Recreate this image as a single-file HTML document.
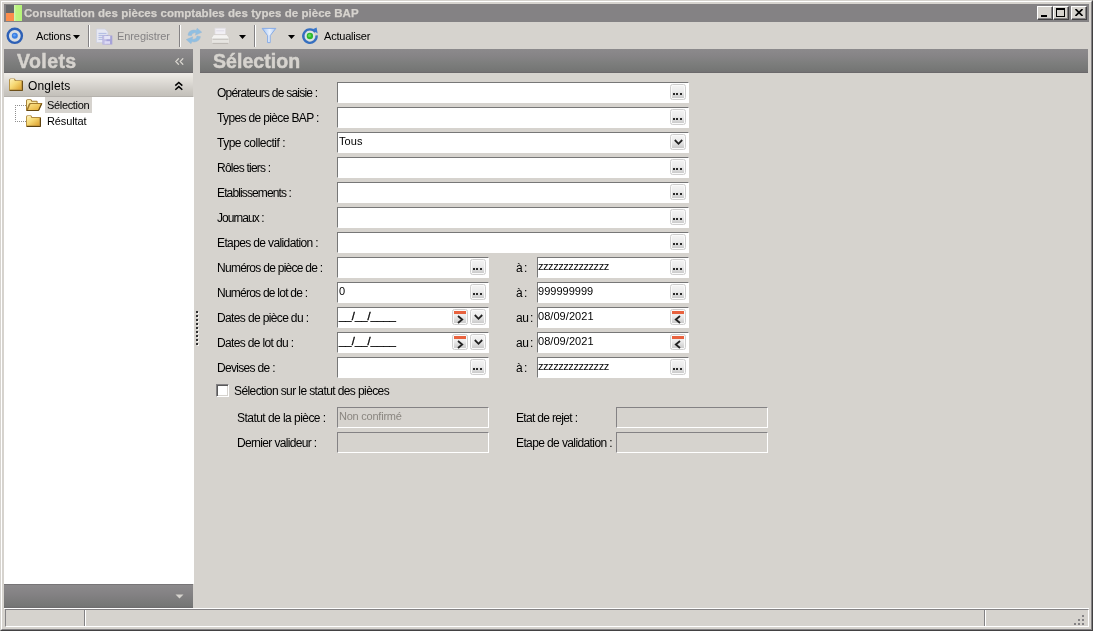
<!DOCTYPE html>
<html lang="fr"><head><meta charset="utf-8"><title>Consultation des pièces comptables des types de pièce BAP</title>
<style>
html,body{margin:0;padding:0;background:#d6d3ce;}
#win{position:relative;width:1093px;height:631px;overflow:hidden;background:#d6d3ce;font-family:"Liberation Sans",sans-serif;font-size:11px;color:#000;}
#win div,#win span,#win svg{position:absolute;box-sizing:border-box;}
.t{white-space:pre;will-change:transform;}
.titlebar{left:4px;top:4px;width:1085px;height:18px;background:#848284;}
.cb{top:6px;width:16px;height:14px;background:#d6d3ce;border:1px solid;border-color:#fff #424142 #424142 #fff;box-shadow:inset -1px -1px 0 #848284;}
.sep{top:25px;width:2px;height:22px;border-left:1px solid #848284;border-right:1px solid #fff;}
.hdr{top:49px;height:24px;background:linear-gradient(#8c8a8c 0,#868486 30%,#7d7e7d 58%,#757675 88%,#737173 95.9%,#6b696b 96%,#6b696b 100%);}
.fld{height:21px;background:#fff;border:1px solid;border-color:#777 #fff #fff #777;}
.fld.dis{background:#d6d3ce;border-color:#848284 #fff #fff #848284;}
.btn{width:16px;height:15.5px;border:1px solid #cfcfcf;border-radius:2.5px;background:linear-gradient(#f4f4f4 0,#ececec 45%,#c6c6c6 100%);box-shadow:inset 0 0 0 1px #fafafa;}
.dots{left:2.4px;top:7.8px;width:10px;height:2.2px;background:linear-gradient(90deg,#2a2a2a 0 2px,transparent 2px 3.4px,#2a2a2a 3.4px 5.4px,transparent 5.4px 6.8px,#2a2a2a 6.8px 8.8px,transparent 8.8px);}

</style></head>
<body>
<div id="win">
<!-- window frame -->
<div style="left:0;top:0;width:1093px;height:631px;border:1px solid;border-color:#d6d3ce #424142 #424142 #d6d3ce;"></div>
<div style="left:1px;top:1px;width:1091px;height:629px;border:1px solid;border-color:#fff #848284 #848284 #fff;"></div>
<!-- title bar -->
<div class="titlebar"></div>
<div style="left:6px;top:5px;width:8px;height:8px;background:#66686a;"></div>
<div style="left:6px;top:13px;width:8px;height:8px;background:#fb8d4c;"></div>
<div style="left:14px;top:5px;width:8px;height:16px;background:linear-gradient(90deg,#d9f7c0 0,#bdf582 25%,#b6f478 100%);"></div>
<div class="cb" style="left:1037px;"><div style="left:3px;top:8px;width:6px;height:2px;background:#000;"></div></div>
<div class="cb" style="left:1053px;"><div style="left:2px;top:1px;width:9px;height:9px;border:1px solid #000;border-top-width:2px;"></div></div>
<div class="cb" style="left:1071px;"><svg style="left:3px;top:2px" width="8" height="7" viewBox="0 0 8 7"><path d="M0.5 0 L7.5 7 M7.5 0 L0.5 7" stroke="#000" stroke-width="1.6" fill="none"/></svg></div>
<!-- toolbar -->
<svg style="left:6px;top:27px" width="18" height="18" viewBox="0 0 18 18">
 <circle cx="8.8" cy="8.8" r="7.1" fill="#d9dee2" stroke="#2d60b6" stroke-width="2.4"/>
 <circle cx="8.8" cy="8.7" r="3" fill="#3a7fe2"/><circle cx="8.4" cy="8.2" r="1.3" fill="#62a2f4"/>
</svg>
<svg style="left:73px;top:35px" width="7" height="4" viewBox="0 0 7 4"><path d="M0 0H7L3.5 4Z" fill="#000"/></svg>
<div class="sep" style="left:88px;"></div>
<svg style="left:96px;top:28px" width="17" height="17" viewBox="0 0 17 17">
 <path d="M0.5 1h8.5l3 3v10.5H0.5z" fill="#e6e8f3" stroke="#cfd2e0" stroke-width=".8"/>
 <path d="M2.5 5.4h8M2.5 7.4h9.5M2.5 9.4h7M2.5 11.4h5" stroke="#a9b3de" stroke-width=".9"/>
 <rect x="6.5" y="7.5" width="9.8" height="9" fill="#a6a2d8"/>
 <rect x="6.5" y="7.5" width="4" height="9" fill="#c5c3e6" opacity=".8"/>
 <rect x="8.2" y="8" width="6" height="3.2" fill="#e4e4f6"/><rect x="8.6" y="13.2" width="5.4" height="2.6" fill="#dcdaf4"/>
</svg>
<div class="sep" style="left:179px;"></div>
<svg style="left:185px;top:27px" width="18" height="18" viewBox="0 0 18 18">
 <path d="M3 8.2 C3.2 4.2 7.5 2.2 11.2 3.4 L12.2 1.2 L16.8 5.2 L10.4 8.2 L11 6 C8.6 5.4 7 6.4 6.4 8.8 Z" fill="#8fbfe2" stroke="#9db9d3" stroke-width=".5"/>
 <path d="M15.4 9.6 C15 13.8 10.6 15.8 7 14.6 L6 16.8 L1.2 12.6 L7.8 9.8 L7.2 12 C9.6 12.6 11.4 11.6 12 9 Z" fill="#8fbfe2" stroke="#9db9d3" stroke-width=".5"/>
</svg>
<svg style="left:211px;top:27px" width="19" height="18" viewBox="0 0 19 18">
 <rect x="4" y="1.2" width="10.4" height="7.4" fill="#f1eff4" stroke="#e0dde2" stroke-width=".8"/>
 <rect x="5.2" y="3" width="8" height="1.4" fill="#e4e1ea"/>
 <path d="M2.6 7.6h13.4l2 3v4.6q0 1.4-1.4 1.4H2q-1.4 0-1.4-1.4V10.6z" fill="#f4f3f1" stroke="#cfccc6" stroke-width=".8"/>
 <path d="M1.4 12.2h16" stroke="#b9b6b0" stroke-width="1"/>
 <path d="M1 13h16.8v2.2q0 1.2-1.2 1.2H2.2q-1.2 0-1.2-1.2z" fill="#e6e4e0"/>
 <path d="M1.6 16.4h15.6" stroke="#bab7b1" stroke-width="1"/>
</svg>
<svg style="left:239px;top:35px" width="7" height="4" viewBox="0 0 7 4"><path d="M0 0H7L3.5 4Z" fill="#000"/></svg>
<div class="sep" style="left:254px;"></div>
<svg style="left:261px;top:27px" width="16" height="17" viewBox="0 0 16 17">
 <defs><linearGradient id="fn" x1="0" y1="0" x2="1" y2="0"><stop offset="0" stop-color="#9fc2f5"/><stop offset=".55" stop-color="#e9f1fd"/><stop offset="1" stop-color="#a9c7f3"/></linearGradient></defs>
 <path d="M1.2 1.4h13.6L9.2 8.6v7h-2.6V8.6z" fill="url(#fn)" stroke="#7ea6e6" stroke-width=".9" stroke-linejoin="round"/>
</svg>
<svg style="left:288px;top:35px" width="7" height="4" viewBox="0 0 7 4"><path d="M0 0H7L3.5 4Z" fill="#000"/></svg>
<svg style="left:301px;top:27px" width="18" height="18" viewBox="0 0 18 18">
 <circle cx="8.9" cy="9" r="5" fill="#dbe6ea"/>
 <path d="M14.4 5.2 A6.7 6.7 0 1 0 15.6 8.4" fill="none" stroke="#356fc0" stroke-width="2.3"/>
 <path d="M11.2 2.6 L15.6 0.6 L16.6 6.6 Z" fill="#3a78cc"/>
 <circle cx="8.9" cy="9" r="3.2" fill="#2db82d"/><circle cx="8.5" cy="8.4" r="1.5" fill="#62dc55"/>
</svg>
<!-- left panel -->
<div class="hdr" style="left:4px;width:189px;"></div>
<svg style="left:175px;top:58px" width="9" height="7" viewBox="0 0 9 7"><path d="M3.8 0.3 L0.8 3.5 L3.8 6.7 M8.2 0.3 L5.2 3.5 L8.2 6.7" fill="none" stroke="#dcd9d2" stroke-width="1.2"/></svg>
<div style="left:4px;top:73px;width:189px;height:24px;background:linear-gradient(#f0ede8 0,#e4e1db 25%,#d7d4cf 50%,#cbc8c2 75%,#c3c0ba 95.9%,#b5b2ad 96%,#b5b2ad 100%);"></div>
<div style="left:4px;top:97px;width:190px;height:487px;background:#fff;"></div>
<div style="left:4px;top:584px;width:189px;height:24px;background:linear-gradient(#777577 0,#777577 4%,#8c8a8c 4.1%,#848284 40%,#757675 92%,#6d6b6d 100%);"></div>
<svg style="left:175px;top:594px" width="9" height="5" viewBox="0 0 9 5"><path d="M0.5 0.5H8.5L4.5 4.5Z" fill="#d6d3ce"/></svg>
<svg style="left:174px;top:81px" width="10" height="10" viewBox="0 0 10 10"><path d="M1.3 4.6 L4.8 1.4 L8.3 4.6 M1.3 8.8 L4.8 5.6 L8.3 8.8" fill="none" stroke="#000" stroke-width="1.5"/></svg>
<!-- onglets folder -->
<svg style="left:0;top:0" width="0" height="0"><defs>
 <linearGradient id="fg" x1="0" y1="0" x2="1" y2="1"><stop offset="0" stop-color="#fdf0b4"/><stop offset=".45" stop-color="#f6d873"/><stop offset="1" stop-color="#dc9f2e"/></linearGradient>
 <linearGradient id="fg2" x1="0" y1="0" x2="1" y2="1"><stop offset="0" stop-color="#fce58e"/><stop offset="1" stop-color="#e6ad32"/></linearGradient>
</defs></svg>
<svg style="left:9px;top:78px" width="14" height="13" viewBox="0 0 14 13">
 <path d="M0 2.2 Q0 0.4 1.6 0.4 H5 Q6 0.4 6.4 1.4 L6.8 2.2 H13 Q14 2.2 14 3.2 V12 Q14 13 13 13 H1 Q0 13 0 12 Z" fill="#b08a3c"/>
 <path d="M0.9 2.4 Q0.9 1.3 1.9 1.3 H4.9 L5.9 3.1 H12.4 V11.6 H0.9 Z" fill="url(#fg)"/>
 <path d="M13.5 3 V12.5 H0.8" fill="none" stroke="#6d4f17" stroke-width="1"/>
 <path d="M1.5 1.4 H5" stroke="#fff6cf" stroke-width=".8"/>
</svg>
<!-- tree -->
<div style="left:45px;top:97px;width:47px;height:16px;background:#d6d3ce;"></div>
<div style="left:15px;top:105px;width:1px;height:17px;background:repeating-linear-gradient(#8e8e8e 0 1px,transparent 1px 2px);"></div>
<div style="left:15px;top:105px;width:11px;height:1px;background:repeating-linear-gradient(90deg,#8e8e8e 0 1px,transparent 1px 2px);"></div>
<div style="left:15px;top:121px;width:11px;height:1px;background:repeating-linear-gradient(90deg,#8e8e8e 0 1px,transparent 1px 2px);"></div>
<svg style="left:26px;top:99px" width="17" height="12" viewBox="0 0 17 12">
 <path d="M0 1.8 Q0 0.2 1.6 0.2 H4.6 Q5.4 0.2 5.8 1 L6.2 1.8 H10.6 Q11.6 1.8 11.6 2.8 V4 H15.6 Q16.6 4 16.2 5 L13.4 11.2 Q13 12 12 12 H1 Q0 12 0 11 Z" fill="#a27a2c"/>
 <path d="M0.9 2 Q0.9 1.1 1.8 1.1 H4.5 L5.5 2.7 H10.7 V4 H4.2 Q3.2 4 2.8 5 L0.9 9.4 Z" fill="#fbe9a2"/>
 <path d="M2 11 L4.2 5.4 Q4.5 4.9 5 4.9 H15.2 L12.6 10.6 Q12.4 11 12 11 Z" fill="url(#fg2)"/>
 <path d="M0.6 11.6 H12.4 L15.6 4.6" fill="none" stroke="#5e4310" stroke-width="1"/>
</svg>
<svg style="left:26px;top:115px" width="15" height="12" viewBox="0 0 15 12">
 <path d="M0 2 Q0 0.3 1.6 0.3 H4.6 Q5.4 0.3 5.8 1.2 L6.2 2 H14 Q15 2 15 3 V11 Q15 12 14 12 H1 Q0 12 0 11 Z" fill="#b08a3c"/>
 <path d="M0.9 2.2 Q0.9 1.2 1.9 1.2 H4.5 L5.5 2.9 H13.4 V10.6 H0.9 Z" fill="url(#fg)"/>
 <path d="M14.5 2.8 V11.5 H0.8" fill="none" stroke="#5e4310" stroke-width="1"/>
 <path d="M1.5 1.3 H4.6" stroke="#fff6cf" stroke-width=".8"/>
</svg>
<!-- splitter dots -->
<div style="left:197px;top:312px;width:2px;height:34px;background:repeating-linear-gradient(#f4f2ee 0 2px,transparent 2px 4px);"></div>
<div style="left:196px;top:311px;width:2px;height:34px;background:repeating-linear-gradient(#303030 0 2px,transparent 2px 4px);"></div>
<!-- right header -->
<div class="hdr" style="left:200px;width:888px;"></div>
<!-- status bar -->
<div style="left:4px;top:608px;width:1085px;height:1px;background:#fff;"></div>
<div style="left:5px;top:609px;width:1084px;height:18px;border:1px solid;border-color:#848284 #fff #fff #848284;"></div>
<div style="left:84px;top:610px;width:2px;height:16px;border-left:1px solid #848284;border-right:1px solid #fff;"></div>
<div style="left:984px;top:610px;width:2px;height:16px;border-left:1px solid #848284;border-right:1px solid #fff;"></div>
<svg style="left:1073px;top:614px" width="12" height="12" viewBox="0 0 12 12" fill="#848284">
 <rect x="9" y="1" width="2" height="2"/><rect x="5" y="5" width="2" height="2"/><rect x="9" y="5" width="2" height="2"/>
 <rect x="1" y="9" width="2" height="2"/><rect x="5" y="9" width="2" height="2"/><rect x="9" y="9" width="2" height="2"/>
</svg>
<!-- form -->
<div class="fld" style="left:337px;top:82px;width:352px;"></div>
<div class="btn" style="left:670px;top:84px;"><div class="dots"></div></div>
<div class="fld" style="left:337px;top:107px;width:352px;"></div>
<div class="btn" style="left:670px;top:109px;"><div class="dots"></div></div>
<div class="fld" style="left:337px;top:132px;width:352px;"></div>
<div class="btn" style="left:670px;top:134px;"><svg style="left:3px;top:4px" width="9" height="7" viewBox="0 0 9 7"><path d="M0.8 1 L4.5 4.8 L8.2 1" fill="none" stroke="#222" stroke-width="1.8"/></svg></div>
<div class="fld" style="left:337px;top:157px;width:352px;"></div>
<div class="btn" style="left:670px;top:159px;"><div class="dots"></div></div>
<div class="fld" style="left:337px;top:182px;width:352px;"></div>
<div class="btn" style="left:670px;top:184px;"><div class="dots"></div></div>
<div class="fld" style="left:337px;top:207px;width:352px;"></div>
<div class="btn" style="left:670px;top:209px;"><div class="dots"></div></div>
<div class="fld" style="left:337px;top:232px;width:352px;"></div>
<div class="btn" style="left:670px;top:234px;"><div class="dots"></div></div>
<div class="fld" style="left:337px;top:257px;width:152px;"></div>
<div class="fld" style="left:537px;top:257px;width:152px;"></div>
<div class="btn" style="left:470px;top:259px;"><div class="dots"></div></div>
<div class="btn" style="left:670px;top:259px;"><div class="dots"></div></div>
<div class="fld" style="left:337px;top:282px;width:152px;"></div>
<div class="fld" style="left:537px;top:282px;width:152px;"></div>
<div class="btn" style="left:470px;top:284px;"><div class="dots"></div></div>
<div class="btn" style="left:670px;top:284px;"><div class="dots"></div></div>
<div class="fld" style="left:337px;top:307px;width:152px;"></div>
<div class="fld" style="left:537px;top:307px;width:152px;"></div>
<div class="btn" style="left:452px;top:309px;"><div style="left:1px;top:1px;width:12px;height:3px;background:#e8623e;"></div><svg style="left:4px;top:5px" width="7" height="9" viewBox="0 0 7 9"><path d="M1 1 L5.2 4.5 L1 8" fill="none" stroke="#222" stroke-width="1.8"/></svg></div>
<div class="btn" style="left:470px;top:309px;"><svg style="left:3px;top:4px" width="9" height="7" viewBox="0 0 9 7"><path d="M0.8 1 L4.5 4.8 L8.2 1" fill="none" stroke="#222" stroke-width="1.8"/></svg></div>
<div class="btn" style="left:670px;top:309px;"><div style="left:1px;top:1px;width:12px;height:3px;background:#e8623e;"></div><svg style="left:3px;top:5px" width="7" height="9" viewBox="0 0 7 9"><path d="M6 1 L1.8 4.5 L6 8" fill="none" stroke="#222" stroke-width="1.8"/></svg></div>
<div class="fld" style="left:337px;top:332px;width:152px;"></div>
<div class="fld" style="left:537px;top:332px;width:152px;"></div>
<div class="btn" style="left:452px;top:334px;"><div style="left:1px;top:1px;width:12px;height:3px;background:#e8623e;"></div><svg style="left:4px;top:5px" width="7" height="9" viewBox="0 0 7 9"><path d="M1 1 L5.2 4.5 L1 8" fill="none" stroke="#222" stroke-width="1.8"/></svg></div>
<div class="btn" style="left:470px;top:334px;"><svg style="left:3px;top:4px" width="9" height="7" viewBox="0 0 9 7"><path d="M0.8 1 L4.5 4.8 L8.2 1" fill="none" stroke="#222" stroke-width="1.8"/></svg></div>
<div class="btn" style="left:670px;top:334px;"><div style="left:1px;top:1px;width:12px;height:3px;background:#e8623e;"></div><svg style="left:3px;top:5px" width="7" height="9" viewBox="0 0 7 9"><path d="M6 1 L1.8 4.5 L6 8" fill="none" stroke="#222" stroke-width="1.8"/></svg></div>
<div class="fld" style="left:337px;top:357px;width:152px;"></div>
<div class="fld" style="left:537px;top:357px;width:152px;"></div>
<div class="btn" style="left:470px;top:359px;"><div class="dots"></div></div>
<div class="btn" style="left:670px;top:359px;"><div class="dots"></div></div>
<div style="left:216px;top:384px;width:13px;height:13px;background:#fff;border:1px solid;border-color:#848284 #fff #fff #848284;box-shadow:inset 1px 1px 0 #5a5a5a,inset -1px -1px 0 #d6d3ce;"></div>
<div class="fld dis" style="left:337px;top:407px;width:152px;"></div>
<div class="fld dis" style="left:337px;top:432px;width:152px;"></div>
<div class="fld dis" style="left:616px;top:407px;width:152px;"></div>
<div class="fld dis" style="left:616px;top:432px;width:152px;"></div>

<span class="t" style="left:24.0px;top:6.00px;font-size:11.5px;line-height:14px;letter-spacing:0.041px;font-weight:bold;color:#d6d3ce;-webkit-text-stroke:0.25px #d6d3ce;">Consultation des pièces comptables des types de pièce BAP</span>
<span class="t" style="left:36.0px;top:29.00px;font-size:11px;line-height:14px;letter-spacing:-0.196px;">Actions</span>
<span class="t" style="left:116.7px;top:29.00px;font-size:11px;line-height:14px;letter-spacing:-0.090px;color:#848284;">Enregistrer</span>
<span class="t" style="left:323.7px;top:29.00px;font-size:11px;line-height:14px;letter-spacing:-0.211px;">Actualiser</span>
<span class="t" style="left:17.4px;top:48.00px;font-size:19.5px;line-height:26px;letter-spacing:0.424px;font-weight:bold;color:#d6d3ce;-webkit-text-stroke:0.5px #d6d3ce;">Volets</span>
<span class="t" style="left:213.0px;top:48.00px;font-size:19.5px;line-height:26px;letter-spacing:0.062px;font-weight:bold;color:#d6d3ce;-webkit-text-stroke:0.5px #d6d3ce;">Sélection</span>
<span class="t" style="left:27.6px;top:78.00px;font-size:12px;line-height:16px;letter-spacing:0.140px;">Onglets</span>
<span class="t" style="left:47.0px;top:98.00px;font-size:11px;line-height:14px;letter-spacing:-0.333px;">Sélection</span>
<span class="t" style="left:47.0px;top:114.00px;font-size:11px;line-height:14px;letter-spacing:-0.108px;">Résultat</span>
<span class="t" style="left:217.0px;top:85.00px;font-size:12px;line-height:16px;letter-spacing:-0.776px;">Opérateurs de saisie :</span>
<span class="t" style="left:217.0px;top:110.00px;font-size:12px;line-height:16px;letter-spacing:-0.643px;">Types de pièce BAP :</span>
<span class="t" style="left:217.0px;top:135.00px;font-size:12px;line-height:16px;letter-spacing:-0.502px;">Type collectif :</span>
<span class="t" style="left:217.0px;top:160.00px;font-size:12px;line-height:16px;letter-spacing:-0.763px;">Rôles tiers :</span>
<span class="t" style="left:217.0px;top:185.00px;font-size:12px;line-height:16px;letter-spacing:-0.876px;">Etablissements :</span>
<span class="t" style="left:217.0px;top:210.00px;font-size:12px;line-height:16px;letter-spacing:-0.939px;">Journaux :</span>
<span class="t" style="left:217.0px;top:235.00px;font-size:12px;line-height:16px;letter-spacing:-0.626px;">Etapes de validation :</span>
<span class="t" style="left:217.0px;top:260.00px;font-size:12px;line-height:16px;letter-spacing:-0.727px;">Numéros de pièce de :</span>
<span class="t" style="left:217.0px;top:285.00px;font-size:12px;line-height:16px;letter-spacing:-0.762px;">Numéros de lot de :</span>
<span class="t" style="left:217.0px;top:310.00px;font-size:12px;line-height:16px;letter-spacing:-0.634px;">Dates de pièce du :</span>
<span class="t" style="left:217.0px;top:335.00px;font-size:12px;line-height:16px;letter-spacing:-0.649px;">Dates de lot du :</span>
<span class="t" style="left:217.0px;top:360.00px;font-size:12px;line-height:16px;letter-spacing:-0.685px;">Devises de :</span>
<span class="t" style="left:515.8px;top:260.00px;font-size:12px;line-height:16px;letter-spacing:0.000px;">à</span>
<span class="t" style="left:523.9px;top:260.00px;font-size:12px;line-height:16px;letter-spacing:0.000px;">:</span>
<span class="t" style="left:515.8px;top:285.00px;font-size:12px;line-height:16px;letter-spacing:0.000px;">à</span>
<span class="t" style="left:523.9px;top:285.00px;font-size:12px;line-height:16px;letter-spacing:0.000px;">:</span>
<span class="t" style="left:515.8px;top:360.00px;font-size:12px;line-height:16px;letter-spacing:0.000px;">à</span>
<span class="t" style="left:523.9px;top:360.00px;font-size:12px;line-height:16px;letter-spacing:0.000px;">:</span>
<span class="t" style="left:515.8px;top:310.00px;font-size:12px;line-height:16px;letter-spacing:-0.359px;">au</span>
<span class="t" style="left:529.7px;top:310.00px;font-size:12px;line-height:16px;letter-spacing:0.000px;">:</span>
<span class="t" style="left:515.8px;top:335.00px;font-size:12px;line-height:16px;letter-spacing:-0.359px;">au</span>
<span class="t" style="left:529.7px;top:335.00px;font-size:12px;line-height:16px;letter-spacing:0.000px;">:</span>
<span class="t" style="left:338.7px;top:134.00px;font-size:11px;line-height:14px;letter-spacing:0.050px;">Tous</span>
<span class="t" style="left:538.4px;top:259.00px;font-size:11px;line-height:14px;letter-spacing:-0.446px;">zzzzzzzzzzzzzz</span>
<span class="t" style="left:338.7px;top:284.00px;font-size:11px;line-height:14px;letter-spacing:0.000px;">0</span>
<span class="t" style="left:538.4px;top:284.00px;font-size:11px;line-height:14px;letter-spacing:0.017px;">999999999</span>
<span class="t" style="left:338.9px;top:309.00px;font-size:11px;line-height:14px;letter-spacing:0.215px;-webkit-text-stroke:0.35px #000;">__/__/____</span>
<span class="t" style="left:538.4px;top:309.00px;font-size:11px;line-height:14px;letter-spacing:0.049px;">08/09/2021</span>
<span class="t" style="left:338.9px;top:334.00px;font-size:11px;line-height:14px;letter-spacing:0.215px;-webkit-text-stroke:0.35px #000;">__/__/____</span>
<span class="t" style="left:538.4px;top:334.00px;font-size:11px;line-height:14px;letter-spacing:0.049px;">08/09/2021</span>
<span class="t" style="left:538.4px;top:359.00px;font-size:11px;line-height:14px;letter-spacing:-0.446px;">zzzzzzzzzzzzzz</span>
<span class="t" style="left:233.5px;top:383.00px;font-size:12px;line-height:16px;letter-spacing:-0.598px;">Sélection sur le statut des pièces</span>
<span class="t" style="left:236.5px;top:410.00px;font-size:12px;line-height:16px;letter-spacing:-0.542px;">Statut de la pièce :</span>
<span class="t" style="left:236.5px;top:435.00px;font-size:12px;line-height:16px;letter-spacing:-0.663px;">Dernier valideur :</span>
<span class="t" style="left:516.0px;top:410.00px;font-size:12px;line-height:16px;letter-spacing:-0.670px;">Etat de rejet :</span>
<span class="t" style="left:516.0px;top:435.00px;font-size:12px;line-height:16px;letter-spacing:-0.608px;">Etape de validation :</span>
<span class="t" style="left:338.7px;top:409.00px;font-size:11px;line-height:14px;letter-spacing:-0.229px;color:#8a8680;">Non confirmé</span>
</div>
</body></html>
